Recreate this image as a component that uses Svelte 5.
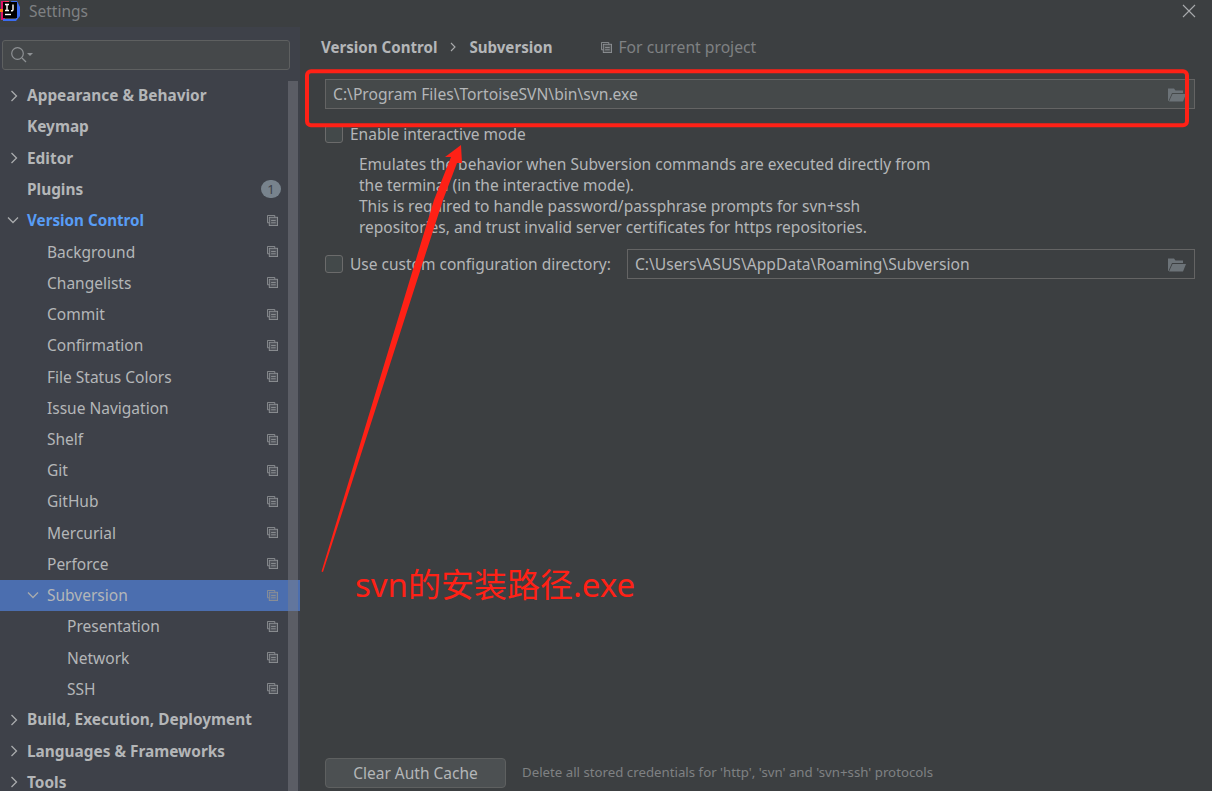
<script>
  const rows = [
    { label: 'Appearance & Behavior', level: 0, arrow: 'right', bold: true },
    { label: 'Keymap', level: 0, bold: true },
    { label: 'Editor', level: 0, arrow: 'right', bold: true },
    { label: 'Plugins', level: 0, bold: true, badge: '1' },
    { label: 'Version Control', level: 0, arrow: 'down', bold: true, accent: true, copy: true },
    { label: 'Background', level: 1, copy: true },
    { label: 'Changelists', level: 1, copy: true },
    { label: 'Commit', level: 1, copy: true },
    { label: 'Confirmation', level: 1, copy: true },
    { label: 'File Status Colors', level: 1, copy: true },
    { label: 'Issue Navigation', level: 1, copy: true },
    { label: 'Shelf', level: 1, copy: true },
    { label: 'Git', level: 1, copy: true },
    { label: 'GitHub', level: 1, copy: true },
    { label: 'Mercurial', level: 1, copy: true },
    { label: 'Perforce', level: 1, copy: true },
    { label: 'Subversion', level: 1, arrow: 'down', copy: true, selected: true },
    { label: 'Presentation', level: 2, copy: true },
    { label: 'Network', level: 2, copy: true },
    { label: 'SSH', level: 2, copy: true },
    { label: 'Build, Execution, Deployment', level: 0, arrow: 'right', bold: true },
    { label: 'Languages & Frameworks', level: 0, arrow: 'right', bold: true },
    { label: 'Tools', level: 0, arrow: 'right', bold: true }
  ]
</script>

{#snippet copyIcon()}
  <svg class="copy" width="11" height="11" viewBox="0 0 12 12" fill="none" stroke="#8d9094" stroke-width="1">
    <path d="M8.5 2.5v-2h-8v8h2" />
    <rect x="2.5" y="2.5" width="9" height="9" fill="#8d9094" fill-opacity="0.25" />
    <path d="M4.5 6h5M4.5 8.5h5" />
  </svg>
{/snippet}

{#snippet folderIcon()}
  <svg class="folder" width="19" height="15" viewBox="0 0 19 15">
    <path d="M1 14V1.5h6l1.5 2H16V6H5L1.5 14z" fill="#6c7378" />
    <path d="M5.5 7H19l-3 7.5H2z" fill="#6c7378" />
  </svg>
{/snippet}

<div class="window">
  <header class="titlebar">
    <svg class="logo" width="20" height="20" viewBox="0 0 20 20">
      <path d="M1 0h8v3H1z" fill="#fe315d" />
      <path d="M1 0h4v19H1z" fill="#dd1265" />
      <path d="M11 0h6l3 6v9l-4 5H3v-2h13z" fill="#3b6cf0" />
      <path d="M0 8h3v3H0z" fill="#f97a12" />
      <rect x="3" y="1" width="14" height="16" fill="#000" />
      <path d="M5 3.5h4M7 3.5v6M5 9.5h4M13 3.5v5q0 1.5-2 1.2" stroke="#fff" stroke-width="1.4" fill="none" />
      <path d="M5 13.5h6" stroke="#fff" stroke-width="1.4" />
    </svg>
    <span class="title">Settings</span>
    <svg class="close" width="14" height="14" viewBox="0 0 14 14" stroke="#a9abad" stroke-width="1.1">
      <path d="M1 1l12 12M13 1L1 13" />
    </svg>
  </header>

  <div class="body">
    <aside class="sidebar">
      <div class="search">
        <svg width="24" height="18" viewBox="0 0 24 18" fill="none" stroke="#8e9194" stroke-width="1.2">
          <circle cx="7.5" cy="7.5" r="5.8" />
          <path d="M12 12l4 4" />
          <path d="M17 7h6l-3 3z" fill="#8e9194" stroke="none" />
        </svg>
      </div>

      <div class="tree">
        <div class="scrollbar"></div>
        {#each rows as row}
          <div class="row level{row.level}" class:selected={row.selected}>
            <span class="arrow">
              {#if row.arrow === 'right'}
                <svg width="10" height="12" viewBox="0 0 10 12" fill="none" stroke="#a9abad" stroke-width="1.3"><path d="M2.5 1l5 5-5 5" /></svg>
              {:else if row.arrow === 'down'}
                <svg width="12" height="10" viewBox="0 0 12 10" fill="none" stroke="#a9abad" stroke-width="1.3"><path d="M1 2.5l5 5 5-5" /></svg>
              {/if}
            </span>
            <span class="label" class:bold={row.bold} class:accent={row.accent}>{row.label}</span>
            {#if row.badge}<span class="badge">{row.badge}</span>{/if}
            {#if row.copy}{@render copyIcon()}{/if}
          </div>
        {/each}
      </div>
    </aside>

    <main class="content">
      <div class="crumbs">
        <span class="crumb">Version Control</span>
        <svg class="sep" width="8" height="10" viewBox="0 0 8 10" fill="none" stroke="#a9abad" stroke-width="1.1"><path d="M2 1l4 4-4 4" /></svg>
        <span class="crumb">Subversion</span>
        <span class="scope">
          {@render copyIcon()}
          <span>For current project</span>
        </span>
      </div>

      <div class="field path">
        <span>C:\Program Files\TortoiseSVN\bin\svn.exe</span>
        {@render folderIcon()}
      </div>

      <div class="check first">
        <span class="box"></span>
        <span>Enable interactive mode</span>
      </div>
      <p class="help">
        Emulates the behavior when Subversion commands are executed directly from<br />
        the terminal (in the interactive mode).<br />
        This is required to handle password/passphrase prompts for svn+ssh<br />
        repositories, and trust invalid server certificates for https repositories.
      </p>

      <div class="check second">
        <span class="box"></span>
        <span>Use custom configuration directory:</span>
        <div class="field dir">
          <span>C:\Users\ASUS\AppData\Roaming\Subversion</span>
          {@render folderIcon()}
        </div>
      </div>

      <div class="footer">
        <button class="clear">Clear Auth Cache</button>
        <span class="note">Delete all stored credentials for 'http', 'svn' and 'svn+ssh' protocols</span>
      </div>
    </main>
  </div>

  <!-- red annotation drawn over the screenshot -->
  <svg class="markup" width="1212" height="791" viewBox="0 0 1212 791">
    <rect x="307" y="71.3" width="880" height="54" rx="4" fill="none" stroke="#ff2116" stroke-width="4" />
    <path d="M321.5 571.5L434 200L451 157L445 157L461 145L462 163L457 163L443 200L323 572z" fill="#ff2116" />
  </svg>
  <div class="caption">svn的安装路径.exe</div>
</div>

<style>
  :global(body) {
    margin: 0;
    background: #3c3f41;
  }

  .window {
    position: relative;
    width: 1212px;
    height: 791px;
    overflow: hidden;
    display: flex;
    flex-direction: column;
    background: #3c3f41;
    color: #b4b6b8;
    font-family: "Noto Sans", "Noto Sans CJK SC", sans-serif;
    font-size: 15.5px;
  }

  .titlebar {
    height: 27px;
    flex: none;
    display: flex;
    align-items: center;
    background: #3c3f41;
  }

  .logo {
    margin: -6px 0 0 0;
    flex: none;
  }

  .title {
    margin-left: 9px;
    color: #7f8183;
    margin-top: -5px;
  }

  .close {
    margin-left: auto;
    margin-right: 16px;
    margin-top: -6px;
  }

  .body {
    flex: 1;
    display: flex;
    min-height: 0;
  }

  .sidebar {
    width: 300px;
    flex: none;
    background: #3e4149;
    display: flex;
    flex-direction: column;
  }

  .search {
    box-sizing: border-box;
    flex: none;
    height: 30px;
    margin: 13px 10px 0 2px;
    background: #45484a;
    border: 1px solid #5e6060;
    border-radius: 3px;
    display: flex;
    align-items: center;
    padding-left: 7px;
  }

  .tree {
    position: relative;
    flex: none;
    margin-top: 10px;
  }

  .scrollbar {
    position: absolute;
    top: 1px;
    right: 2px;
    bottom: -30px;
    width: 10px;
    background: #7f8087;
    opacity: 0.45;
    z-index: 2;
  }

  .row {
    height: 31.23px;
    display: flex;
    align-items: center;
    position: relative;
  }

  .row.selected {
    background: #4b6eaf;
  }

  .arrow {
    width: 27px;
    flex: none;
    display: flex;
    justify-content: flex-end;
    padding-right: 8px;
    box-sizing: border-box;
  }

  .level1 .arrow { width: 47px; }
  .level2 .arrow { width: 67px; }

  .label.bold {
    font-weight: 700;
    font-size: 15.4px;
  }

  .label.accent {
    color: #589df6;
    font-size: 15.2px;
  }

  .copy {
    flex: none;
  }

  .row .copy {
    margin-left: auto;
    margin-right: 22px;
  }

  .badge {
    margin-left: auto;
    margin-right: 19px;
    width: 20px;
    height: 18px;
    border-radius: 9px;
    background: #78838d;
    color: #3e4149;
    font-size: 13px;
    display: flex;
    align-items: center;
    justify-content: center;
  }

  .content {
    flex: 1;
    min-width: 0;
    display: flex;
    flex-direction: column;
    padding: 0 17px 0 25px;
  }

  .crumbs {
    height: 40px;
    display: flex;
    align-items: center;
    margin-left: -4px;
    flex: none;
  }

  .crumb {
    font-weight: 700;
    font-size: 15.1px;
  }

  .sep {
    margin: 0 12px;
  }

  .scope {
    display: flex;
    align-items: center;
    gap: 6px;
    margin-left: 49px;
    color: #7f8183;
    font-size: 15.7px;
  }

  .field {
    box-sizing: border-box;
    height: 30px;
    display: flex;
    align-items: center;
    justify-content: space-between;
    padding: 0 8px 0 7px;
    background: #45494a;
    border: 1px solid #646464;
    font-size: 15.65px;
  }

  .path {
    flex: none;
    margin-top: 12px;
  }

  .folder {
    flex: none;
  }

  .check {
    display: flex;
    align-items: center;
    flex: none;
  }

  .first {
    margin-top: 14px;
    height: 22px;
  }

  .box {
    box-sizing: border-box;
    width: 18px;
    height: 18px;
    border: 1px solid #6b6b6b;
    border-radius: 3px;
    background: #43494a;
    margin-right: 7px;
    flex: none;
  }

  .help {
    flex: none;
    margin: 9px 0 0 34px;
    line-height: 21px;
  }

  .second {
    margin-top: 11px;
  }

  .dir {
    flex: 1;
    margin-left: 16px;
    background: transparent;
  }

  .footer {
    margin-top: auto;
    margin-bottom: 3px;
    display: flex;
    align-items: center;
    flex: none;
  }

  .clear {
    width: 181px;
    height: 30px;
    background: #4c5052;
    border: 1px solid #5e6060;
    border-radius: 4px;
    color: #b4b6b8;
    font: inherit;
  }

  .note {
    margin-left: 16px;
    padding-bottom: 2px;
    font-size: 13.25px;
    color: #7f8183;
  }

  .markup {
    position: absolute;
    inset: 0;
    pointer-events: none;
  }

  .caption {
    position: absolute;
    left: 355px;
    top: 563px;
    color: #ff2116;
    font-size: 33px;
    line-height: 44px;
  }
</style>
